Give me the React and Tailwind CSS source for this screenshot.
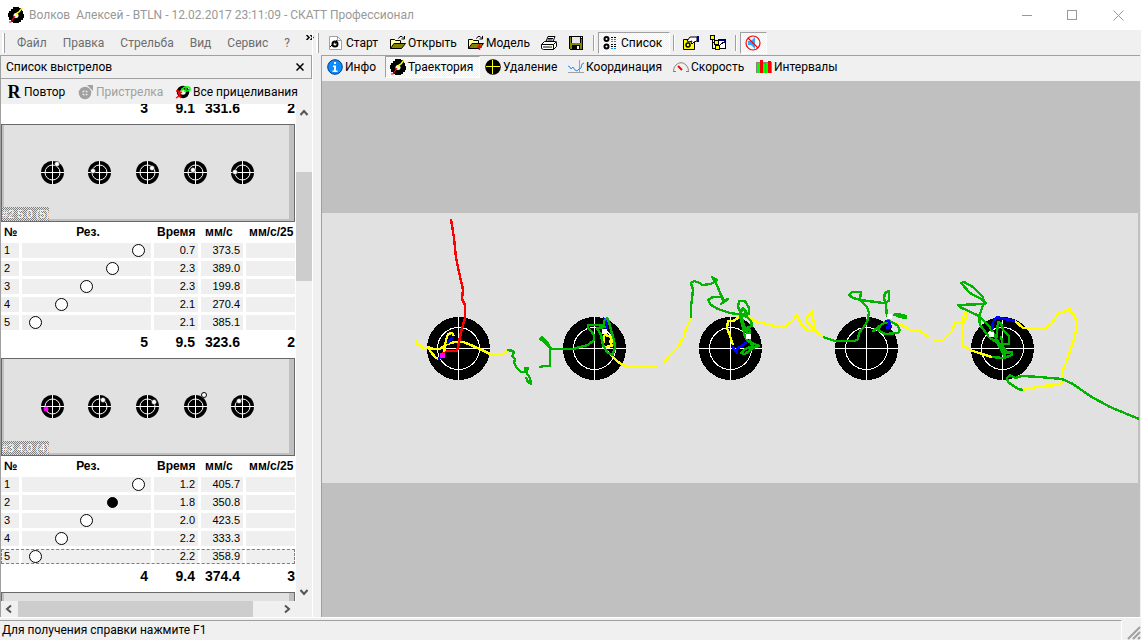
import clsx from 'clsx';

const SERIES = [
  {
    id: 2,
    label: '#2 5.0 (5)',
    hits: [
      { x: 56, y: 40 },
      { x: 92, y: 47 },
      { x: 151, y: 44 },
      { x: 192, y: 46 },
      { x: 234, y: 48 },
    ],
    shots: [
      { n: 1, time: '0.7', speed: '373.5' },
      { n: 2, time: '2.3', speed: '389.0' },
      { n: 3, time: '2.3', speed: '199.8' },
      { n: 4, time: '2.1', speed: '270.4' },
      { n: 5, time: '2.1', speed: '385.1' },
    ],
    total: { hits: '5', time: '9.5', speed: '323.6', last: '2' },
  },
  {
    id: 3,
    label: '#3 4.0 (4)',
    hits: [
      { x: 45, y: 51, color: '#f0f' },
      { x: 102, y: 42 },
      { x: 153, y: 44 },
      { x: 203, y: 37, miss: true },
      { x: 238, y: 43 },
    ],
    shots: [
      { n: 1, time: '1.2', speed: '405.7' },
      { n: 2, time: '1.8', speed: '350.8', filled: true },
      { n: 3, time: '2.0', speed: '423.5' },
      { n: 4, time: '2.2', speed: '333.3' },
      { n: 5, time: '2.2', speed: '358.9', focused: true },
    ],
    total: { hits: '4', time: '9.4', speed: '374.4', last: '3' },
  },
];

// Shot 1 is drawn in the rightmost slot, shot 5 in the leftmost
const SLOTS = ['col-start-5', 'col-start-4', 'col-start-3', 'col-start-2', 'col-start-1'];

const THUMB_TARGETS = [51, 98, 146, 194, 241];
const TARGETS = [458, 594, 730, 866, 1002];

const GREEN = '#00b400';
const YELLOW = '#ffff00';
const BLUE = '#0000ff';
const RED = '#ff0000';

const TRACES = [
  [YELLOW, '416,340 417,344 421,346 425,349 428,347 433,349 440,349 447,344 455,342 463,342 473,346 482,350 490,354 500,355 505,353 507,351'],
  [YELLOW, '428,347 431,352 435,357 438,359'],
  [BLUE, '438,359 442,356'],
  [RED, '451,219 454,238 456,258 459,272 462,285 463,290 462,299 465,305 465,318 461,332 458,347 457,351 445,351 442,355'],
  [YELLOW, '454,336 452,333 448,334 446,340 445,347 444,352'],
  [BLUE, '453,337 447,344'],
  [GREEN, '507,351 508,350 513,351 514,353 512,356 515,359 514,363 517,368 521,372 526,372 525,368 528,368 526,372 530,378 531,384 528,382 526,377'],
  [YELLOW, '604,335 603,347 608,352 613,357 618,362 627,367 657,366'],
  [YELLOW, '604,335 610,336 613,342 610,341 612,346 605,347'],
  [BLUE, '603,318 606,320 607,325 607,330'],
  [GREEN, '539,367 545,366 550,366 550,348 547,342 542,337 540,339 543,341 547,345 552,349 573,349 580,347 588,345 594,340 594,335 591,331 588,328 588,325 598,325 604,325 604,321 607,318 609,322 611,330 614,340 615,348 612,355 607,352 603,345 601,335 597,328 605,327 598,325'],
  [YELLOW, '664,363 670,355 678,347 684,337 686,329 691,318'],
  [YELLOW, '733,345 730,336 727,328 728,321 733,321 740,317 747,317 757,322 767,324 778,327 785,327 792,321 797,315 802,325 807,330 815,331 807,322 807,317 813,311 813,317 815,330 823,337'],
  [GREEN, '691,318 691,307 693,290 691,283 694,281 700,283 702,285 711,284 717,280 712,277 717,285 720,293 724,301 728,299 721,304 724,301 721,297 713,297 708,300 711,305 718,309 730,313 745,315 749,314 749,308 745,301 739,301 738,307 741,313 743,308 747,313 740,315 741,320 743,328 745,337 748,341 759,346 753,348 745,354 741,353 745,349 753,346 750,342 750,330 746,328 752,326 751,321 747,317 741,314'],
  [GREEN, '741,314 744,326 748,334 746,337'],
  [BLUE, '733,346 734,350 737,353 737,349 747,342'],
  [GREEN, '823,337 835,341 855,341 858,339 859,333 863,328 867,322 869,313 867,307 862,302 860,299 861,292 852,292 849,295 853,298 861,300 883,303 889,301 889,291 885,293 884,298 886,305 887,317'],
  [YELLOW, '892,322 902,325 910,330 918,330 929,337'],
  [GREEN, '888,320 873,331 880,327 878,330 885,334 898,333 900,330 897,325 888,320 885,324'],
  [GREEN, '893,315 898,314 906,316 906,318 900,317 896,315 905,317'],
  [BLUE, '885,321 889,321 891,327 887,328 889,323'],
  [YELLOW, '934,340 942,341 953,330 954,324 958,322 963,323 963,317 965,312 967,316 963,323 962,345 970,350 982,354 992,357'],
  [GREEN, '992,357 1003,358 1007,357 1012,355 1012,352 1005,353 1000,348 996,340 997,332 998,322 1001,323 1003,330 1009,336 1009,344 1000,344 1007,352 998,343 990,338 980,325 979,317 983,305 986,303 983,300 970,293 961,283 964,282 973,287 983,297 984,304 958,305 960,307 979,316 990,327 998,342 1005,358 1001,336'],
  [BLUE, '992,330 993,322 997,317 1005,319 1015,321'],
  [YELLOW, '1015,321 1023,328 1045,329 1052,323 1058,314 1070,309 1072,313 1077,320 1075,337 1068,357 1063,370 1062,382 1060,385 1040,386 1023,390'],
  [GREEN, '1023,390 1018,389 1008,382 1007,378 1010,375 1015,378 1022,376 1040,377 1050,378 1062,379 1073,384 1090,396 1110,407 1139,419'],
];

const AIM_POINTS = [
  [602, 329],
  [746, 334],
  [887, 314],
  [989, 332],
];

const ICON = 'h-4 w-4 shrink-0';

function AppIcon({ className = ICON }) {
  return (
    <svg viewBox="0 0 16 16" className={className} aria-hidden="true">
      <path d="M5 0h6v1h3v3h1v3h1v4h-1v2h-2v2h-2v1H5v-1H3v-2H1v-3H0V6h1V4h2V2h2z" fill="#000" />
      <circle cx="8" cy="8.500" r="2.500" fill="#fff" />
      <path d="M8 8 9 6l2-1 3-4" stroke="#ff0" strokeWidth="1.500" fill="none" />
      <path d="M1 15h2l2-3 2-3" stroke="#f00" strokeWidth="1.200" fill="none" />
    </svg>
  );
}

function ReplayIcon() {
  return <span className="w-4 font-['Liberation_Serif',serif] text-lg leading-4 font-bold">R</span>;
}

function ZeroingIcon() {
  return (
    <svg viewBox="0 0 16 16" className={ICON} aria-hidden="true">
      <circle cx="7" cy="9" r="4.500" fill="none" stroke="#a0a0a0" strokeWidth="3.500" />
      <path d="M7 6v6M4 9h6" stroke="#a0a0a0" strokeWidth="1.500" />
      <path d="M9 1h6v6z" fill="#a0a0a0" />
    </svg>
  );
}

function AllAimsIcon() {
  return (
    <svg viewBox="0 0 16 16" className={ICON} aria-hidden="true">
      <circle cx="8" cy="8" r="4.500" fill="#fff" stroke="#000" strokeWidth="3.500" />
      <path d="M7 7V5l3-2h4l1 1v2l-3 1H9M11 3v3" stroke="#0f0" strokeWidth="1.500" fill="none" />
      <path d="M1 7h3l1 2 2-1M3 8l3 6M1 14l3-2 2-4" stroke="#f00" strokeWidth="1.500" fill="none" />
    </svg>
  );
}

function StartIcon() {
  return (
    <svg viewBox="0 0 16 16" className={ICON} aria-hidden="true">
      <path d="M1.500 1.500h8l4 4v9h-12z" fill="#fff" stroke="#a0a0a0" />
      <path d="M9.500 1.500v4h4" fill="none" stroke="#a0a0a0" />
      <circle cx="7" cy="9" r="2.500" fill="#fff" stroke="#000" strokeWidth="2" />
      <path d="M7 9l2-4M2 12l3-3" stroke="#000" />
    </svg>
  );
}

function OpenIcon({ plus }) {
  return (
    <svg viewBox="0 0 16 16" className={ICON} aria-hidden="true">
      <path d="M.5 13.500v-9h4l1 1h5v2.500" fill="#ffff9c" stroke="#000" />
      <path d="M.5 13.500 4 8.500h11.500l-4 5z" fill="#848400" stroke="#000" />
      <path d="M8.500 3.500 10 1.500h2l2 2M14.500 1v3h-3" fill="none" stroke="#000" />
      {plus && <path d="M11.500 9v6M9 12h5" stroke="#f00" strokeWidth="1.500" />}
    </svg>
  );
}

function PrintIcon() {
  return (
    <svg viewBox="0 0 16 16" className={ICON} aria-hidden="true">
      <path d="M5 6.500 7 1.500h7l-2 5z" fill="#fff" stroke="#000" />
      <path d="M7 3.500h5M6.500 5h5" stroke="#000" />
      <path d="m.5 9.500 3-3h11l1 1v4l-3 3h-10l-2-1z" fill="#fff" stroke="#000" />
      <path d="M.5 9.500h12l3-3M12.500 9.500v5M2 12h9" fill="none" stroke="#000" />
      <path d="M8 11h2" stroke="#dede00" />
    </svg>
  );
}

function SaveIcon() {
  return (
    <svg viewBox="0 0 16 16" className={ICON} aria-hidden="true" shapeRendering="crispEdges">
      <path d="M1 1h14v14H2l-1-1z" fill="#000" />
      <path d="M2 2h1v6h10V4h1v10H2z" fill="#848400" />
      <path d="M4 2h8v6H4z" fill="#e8e8e8" />
      <path d="M4 10h8v5H4z" fill="#000" />
      <path d="M9 11h2v3H9zM13 2h1v1h-1z" fill="#fff" />
    </svg>
  );
}

function ListIcon() {
  return (
    <svg viewBox="0 0 16 16" className={ICON} aria-hidden="true">
      <circle cx="3.500" cy="4" r="2" fill="#fff" stroke="#000" strokeWidth="2" />
      <circle cx="3.500" cy="11.500" r="2" fill="#fff" stroke="#000" strokeWidth="2" />
      <path d="M8 2.500h6M8 9.500h6M8 11.500h6" stroke="#000" strokeDasharray="2 1" />
      <path d="M8 4.500h6M8 6.500h6M8 13.500h6" stroke="#0090ff" strokeDasharray="2 1" />
    </svg>
  );
}

function PropertiesIcon() {
  return (
    <svg viewBox="0 0 16 16" className={ICON} aria-hidden="true">
      <path d="M.5 4.500h11v10H.5z" fill="#ff0" stroke="#000" />
      <circle cx="5" cy="10" r="2" fill="none" stroke="#000" strokeWidth="1.500" />
      <path d="m4 6 3-4h7v4l-3 1-2 2-1-1 1-2-3 1z" fill="#fff" stroke="#000" />
      <path d="M14 1h2v6h-2z" fill="#000084" />
    </svg>
  );
}

function TreeIcon() {
  return (
    <svg viewBox="0 0 16 16" className={ICON} aria-hidden="true" shapeRendering="crispEdges">
      <path d="M8.500 4.500h7v9h-8z" fill="#fff" stroke="#000" />
      <path d="M2.500 4v9.500H6M2.500 7.500H5" fill="none" stroke="#000" />
      <path d="M.5.500h4v4h-4zM4.500 5.500h4v4h-4zM5.500 10.500h4v4h-4z" fill="#ff0" stroke="#000" />
      <path d="M9 5.500h6M14.500 5v3" stroke="#000084" />
      <path d="m10 10 4-3" stroke="#000" />
    </svg>
  );
}

function MuteIcon() {
  return (
    <svg viewBox="0 0 16 16" className={ICON} aria-hidden="true">
      <path d="M3 6h3l4-4v12l-4-4H3z" fill="#31a5ff" />
      <circle cx="8" cy="8" r="7" fill="none" stroke="#f00" strokeWidth="1.200" />
      <path d="m3 3 10 10" stroke="#f00" strokeWidth="1.200" />
    </svg>
  );
}

function InfoIcon() {
  return (
    <svg viewBox="0 0 16 16" className={ICON} aria-hidden="true">
      <circle cx="8" cy="8" r="7.300" fill="#0c8cff" stroke="#003c84" />
      <path d="M7 3h2v2H7zM6 6.500h3v5h1.500V13h-5v-1.500H7V8H6z" fill="#fff" />
    </svg>
  );
}

function RemovalIcon() {
  return (
    <svg viewBox="0 0 16 16" className={ICON} aria-hidden="true">
      <circle cx="8" cy="8" r="7.800" fill="#000" />
      <path d="M7.500 1v14M1 7.500h14" stroke="#ff0" />
    </svg>
  );
}

function CoordinationIcon() {
  return (
    <svg viewBox="0 0 16 16" className={ICON} aria-hidden="true">
      <path d="M0 13.500h16M11.500 1v13" stroke="#a0a0a0" />
      <path d="m0 7 2 1 1 2 2-2 2 3 2 1 2-2 2-1 1-4 2-1" fill="none" stroke="#1e90ff" />
    </svg>
  );
}

function SpeedIcon() {
  return (
    <svg viewBox="0 0 16 16" className={ICON} aria-hidden="true">
      <path d="M1 13c-1-2 0-5 2-7 3-3 7-3 10 0 2 2 3 5 2 7" fill="none" stroke="#808080" />
      <path d="M0 12.500h3M13 12.500h3" stroke="#808080" />
      <path d="m5 7 4 4" stroke="#f00" strokeWidth="2" />
    </svg>
  );
}

function IntervalsIcon() {
  return (
    <svg viewBox="0 0 16 16" className={ICON} aria-hidden="true" shapeRendering="crispEdges">
      <path d="M0 3h16v11H0z" fill="#808080" />
      <path d="M1 4h3v10H1zM7 5h2v9H7zM10 4h2v10h-2z" fill="#0f0" />
      <path d="M4 1h3v13H4zM12 2h3v12h-3z" fill="#f00" />
    </svg>
  );
}

function Chevron({ d }) {
  return (
    <svg viewBox="0 0 16 16" className="h-4 w-4" aria-hidden="true">
      <path d={d} fill="none" stroke="#555" strokeWidth="2" />
    </svg>
  );
}

function ToolButton({ icon, label, pressed, disabled, className, title }) {
  return (
    <button
      type="button"
      title={title}
      aria-label={label || title}
      aria-pressed={pressed}
      disabled={disabled}
      className={clsx(
        'flex h-[22px] shrink-0 items-center gap-0.5 overflow-visible border px-1 whitespace-nowrap',
        pressed
          ? 'border-t-[#a0a0a0] border-r-white border-b-white border-l-[#a0a0a0] bg-[repeating-conic-gradient(#fff_0_25%,#f0f0f0_0_50%)] bg-[length:2px_2px]'
          : 'border-transparent',
        disabled && 'text-[#a0a0a0]',
        className
      )}
    >
      {icon}
      {label && <span>{label}</span>}
    </button>
  );
}

function Separator() {
  return <span className="mx-[3px] h-4 w-0.5 shrink-0 border-r border-l border-r-white border-l-[#a0a0a0]" />;
}

function Grip() {
  return <span className="h-5 w-[3px] shrink-0 border-r border-[#a0a0a0] bg-white" />;
}

function SeriesThumb({ label, hits }) {
  return (
    <div className="relative h-[98px] border border-[#696969] bg-[#e1e1e1]">
      <div className="h-full border-r-[5px] border-b-2 border-l-2 border-[#c0c0c0]" />
      <svg viewBox="0 0 292 96" className="absolute inset-0 h-full w-full" aria-hidden="true">
        {THUMB_TARGETS.map((x) => (
          <g key={x} transform={`translate(${x - 1} 47)`}>
            <circle cx=".5" cy=".5" r="11.500" fill="#000" />
            <circle cx=".5" cy=".5" r="7.500" fill="none" stroke="#fff" />
            <path d="M.5-11v23M-11 .5h23" stroke="#fff" />
          </g>
        ))}
        {hits.map((hit) => (
          <circle
            key={hit.x}
            cx={hit.x - 1}
            cy={hit.y - 1}
            r="2.500"
            fill={hit.color || '#fff'}
            stroke={hit.color ? 'none' : '#000'}
            strokeWidth={hit.miss ? 1 : 0.5}
          />
        ))}
      </svg>
      {label && (
        <span className="absolute bottom-0 left-0 h-3.5 bg-[repeating-conic-gradient(#808080_0_25%,#e1e1e1_0_50%)] bg-[length:2px_2px] text-[11px] leading-3.5 text-white">
          {label}
        </span>
      )}
    </div>
  );
}

function Columns() {
  return (
    <colgroup>
      <col className="w-[21px]" />
      <col className="w-[132px]" />
      <col className="w-[47px]" />
      <col className="w-[45px]" />
      <col />
    </colgroup>
  );
}

function TotalRow({ total }) {
  return (
    <tr className="h-[19px] text-right text-sm leading-[19px] font-bold">
      <td />
      <td className="pr-1.5">{total.hits}</td>
      <td className="pr-1.5">{total.time}</td>
      <td className="pr-1.5">{total.speed}</td>
      <td>{total.last}</td>
    </tr>
  );
}

const TABLE = 'mb-[3px] w-full table-fixed border-separate border-spacing-x-0 border-spacing-y-[3px] whitespace-nowrap';
const CELL = 'border-r-[3px] border-white bg-[#efefef] p-0';

function SeriesTable({ shots, total }) {
  return (
    <table className={TABLE}>
      <Columns />
      <thead>
        <tr className="h-[15px] text-xs leading-[15px] font-bold">
          <th className="pl-[3px] text-left">№</th>
          <th>Рез.</th>
          <th className="pl-[3px] text-left">Время</th>
          <th className="pl-1 text-left">мм/с</th>
          <th className="pl-[3px] text-left">мм/с/25</th>
        </tr>
      </thead>
      <tbody>
        {shots.map((shot, i) => (
          <tr
            key={shot.n}
            className={clsx(
              'h-[15px] text-right text-[11px] leading-[15px]',
              shot.focused && 'outline-1 -outline-offset-1 outline-[#808080] outline-dashed'
            )}
          >
            <td className={CELL}>
              <div className="pl-[3px] text-left">{shot.n}</div>
            </td>
            <td className={CELL}>
              <div className="grid h-[15px] grid-cols-5 items-center justify-items-center pl-px">
                <span
                  className={clsx(
                    'rounded-full border',
                    SLOTS[i],
                    shot.filled ? 'h-[11px] w-[11px] border-black bg-black' : 'h-[13px] w-[13px] border-black bg-white'
                  )}
                />
              </div>
            </td>
            <td className={CELL}>
              <div className="pr-[3px]">{shot.time}</div>
            </td>
            <td className={CELL}>
              <div className="pr-[3px]">{shot.speed}</div>
            </td>
            <td className="bg-[#efefef]" />
          </tr>
        ))}
        <TotalRow total={total} />
      </tbody>
    </table>
  );
}

function ShotList() {
  return (
    <div className="flex min-h-0 flex-1 flex-col">
      <div className="flex min-h-0 flex-1">
        <div className="min-w-0 flex-1 overflow-hidden bg-white font-['Liberation_Sans',Arial,sans-serif]">
          {/* list is scrolled part way through the first series */}
          <div className="-mt-2">
            <table className={TABLE}>
              <Columns />
              <tbody>
                <TotalRow total={{ hits: '3', time: '9.1', speed: '331.6', last: '2' }} />
              </tbody>
            </table>
            {SERIES.map((series) => (
              <section key={series.id}>
                <SeriesThumb label={series.label} hits={series.hits} />
                <SeriesTable shots={series.shots} total={series.total} />
              </section>
            ))}
            <SeriesThumb label="" hits={[]} />
          </div>
        </div>
        <div className="flex w-[17px] flex-col items-center border-l border-white bg-[#f0f0f0]">
          <button type="button" aria-label="Вверх">
            <Chevron d="m4.500 11 3.500-4 3.500 4" />
          </button>
          <div className="flex min-h-0 flex-1 flex-col self-stretch">
            <div className="h-[52px]" />
            <div className="h-[109px] bg-[#cdcdcd]" />
          </div>
          <button type="button" aria-label="Вниз">
            <Chevron d="m4.500 5 3.500 4 3.500-4" />
          </button>
        </div>
      </div>
      <div className="flex h-4 shrink-0 bg-[#f0f0f0] pr-[17px]">
        <button type="button" aria-label="Влево">
          <Chevron d="m10 4.500-4 3.500 4 3.500" />
        </button>
        <div className="flex flex-1 pl-px">
          <div className="w-[235px] bg-[#cdcdcd]" />
        </div>
        <button type="button" aria-label="Вправо">
          <Chevron d="m6 4.500 4 3.500-4 3.500" />
        </button>
      </div>
    </div>
  );
}

function TraceCanvas() {
  return (
    <div className="flex min-h-0 flex-1 items-center bg-[#c0c0c0] pr-0.5 pb-0.5">
      <svg
        viewBox="322 213 816 270"
        className="h-auto w-full overflow-visible bg-[#e1e1e1]"
        shapeRendering="crispEdges"
        role="img"
        aria-label="Траектория"
      >
        {TARGETS.map((x) => (
          <g key={x} transform={`translate(${x} 348)`}>
            <circle cx=".5" cy=".5" r="31.500" fill="#000" />
            <circle cx=".5" cy=".5" r="21" fill="none" stroke="#fff" />
            <path d="M.5-31v63M-31 .5h63" stroke="#fff" />
          </g>
        ))}
        {TRACES.map(([color, points]) => (
          <polyline
            key={points}
            points={points}
            fill="none"
            stroke={color}
            strokeWidth="2.400"
            strokeLinejoin="round"
          />
        ))}
        <rect x="440" y="353" width="5" height="5" fill="#f0f" />
        {AIM_POINTS.map(([x, y]) => (
          <rect key={x} x={x} y={y} width="5" height="5" fill="#fff" />
        ))}
      </svg>
    </div>
  );
}

function TitleBar() {
  return (
    <header className="flex h-[30px] shrink-0 items-center bg-white pl-2 text-[#999]">
      <AppIcon className="h-4 w-4 shrink-0" />
      <h1 className="ml-[5px] flex-1 text-xs whitespace-pre">
        Волков  Алексей - BTLN - 12.02.2017 23:11:09 - СКАТТ Профессионал
      </h1>
      <button type="button" aria-label="Свернуть" className="flex w-[45px] justify-center">
        <svg viewBox="0 0 11 11" className="h-[11px] w-[11px]" shapeRendering="crispEdges">
          <path d="M0 5.500h10" stroke="#999" />
        </svg>
      </button>
      <button type="button" aria-label="Развернуть" className="flex w-[45px] justify-center">
        <svg viewBox="0 0 11 11" className="h-[11px] w-[11px]" shapeRendering="crispEdges">
          <path d="M.5.500h9v9h-9z" fill="none" stroke="#999" />
        </svg>
      </button>
      <button type="button" aria-label="Закрыть" className="flex w-[46px] justify-center">
        <svg viewBox="0 0 11 11" className="h-[11px] w-[11px]">
          <path d="m.5.500 10 10M10.500.500l-10 10" stroke="#999" />
        </svg>
      </button>
    </header>
  );
}

function App() {
  return (
    <div className="flex h-screen flex-col overflow-hidden bg-[#f0f0f0] font-['Roboto','Noto_Sans',sans-serif] text-xs text-black">
      <TitleBar />
      <div className="flex min-h-0 flex-1">
        <aside className="flex w-[312px] shrink-0 flex-col">
          <nav className="flex h-[25px] shrink-0 items-center gap-4 pl-0.5 text-[#6d6d6d]">
            <Grip />
            <button type="button" className="-ml-1">Файл</button>
            <button type="button">Правка</button>
            <button type="button">Стрельба</button>
            <button type="button">Вид</button>
            <button type="button">Сервис</button>
            <button type="button">?</button>
            <button type="button" aria-label="Ещё" className="mr-[3px] mb-2.5 ml-auto shrink-0">
              <svg viewBox="0 0 8 5" className="h-[5px] w-2" aria-hidden="true">
                <path d="m.5 0 2.500 2.500L.5 5M4.500 0 7 2.500 4.500 5" fill="none" stroke="#000" strokeWidth="1.500" />
              </svg>
            </button>
          </nav>
          <div className="flex h-6 shrink-0 items-center justify-between border border-[#a0a0a0] pr-[7px] pl-[5px]">
            <h2>Список выстрелов</h2>
            <button type="button" aria-label="Закрыть панель">
              <svg viewBox="0 0 8 8" className="h-2 w-2" aria-hidden="true">
                <path d="m.5.500 7 7M7.500.500l-7 7" stroke="#000" strokeWidth="1.500" />
              </svg>
            </button>
          </div>
          <div className="flex min-h-0 flex-1 flex-col border-l border-[#a0a0a0]">
            <div className="flex h-[25px] shrink-0 items-center">
              <ToolButton icon={<ReplayIcon />} label="Повтор" className="w-[72px]" />
              <ToolButton icon={<ZeroingIcon />} label="Пристрелка" disabled className="w-[97px]" />
              <ToolButton icon={<AllAimsIcon />} label="Все прицеливания" />
            </div>
            <ShotList />
          </div>
        </aside>
        <main className="flex min-w-0 flex-1 flex-col border-l border-white pr-px">
          <div className="flex h-[25px] shrink-0 items-center pl-[3px]">
            <Grip />
            <div className="flex flex-1 items-center pl-1">
              <ToolButton icon={<StartIcon />} label="Старт" className="w-[62px]" />
              <ToolButton icon={<OpenIcon />} label="Открыть" className="w-[78px]" />
              <ToolButton icon={<OpenIcon plus />} label="Модель" className="w-[73px]" />
              <ToolButton icon={<PrintIcon />} title="Печать" className="w-[27px]" />
              <ToolButton icon={<SaveIcon />} title="Сохранить" className="w-[27px]" />
              <Separator />
              <ToolButton icon={<ListIcon />} label="Список" pressed className="w-[72px]" />
              <Separator />
              <ToolButton icon={<PropertiesIcon />} title="Свойства" className="w-[27px]" />
              <ToolButton icon={<TreeIcon />} title="Дерево" className="w-[27px]" />
              <Separator />
              <ToolButton icon={<MuteIcon />} title="Без звука" pressed className="w-[27px]" />
            </div>
          </div>
          <div className="ml-2 flex min-h-0 flex-1 flex-col border-t border-l border-[#a0a0a0]">
            <div className="flex h-[25px] shrink-0 items-start">
              <ToolButton icon={<InfoIcon />} label="Инфо" className="w-[63px]" />
              <ToolButton icon={<AppIcon />} label="Траектория" pressed className="w-[95px]" />
              <ToolButton icon={<RemovalIcon />} label="Удаление" className="w-[83px]" />
              <ToolButton icon={<CoordinationIcon />} label="Координация" className="w-[105px]" />
              <ToolButton icon={<SpeedIcon />} label="Скорость" className="w-[83px]" />
              <ToolButton icon={<IntervalsIcon />} label="Интервалы" className="w-[90px]" />
            </div>
            <TraceCanvas />
          </div>
        </main>
      </div>
      <footer className="flex h-[23px] shrink-0 items-end border-t border-white pt-0.5">
        <p className="h-5 flex-1 border-t border-r border-t-[#a0a0a0] border-r-white pl-0.5 leading-[18px]">
          Для получения справки нажмите F1
        </p>
        <svg viewBox="0 0 19 14" className="h-3.5 w-[19px]" aria-hidden="true">
          <path d="M6 13 18 1M11 13l7-7M16 13l2-2" stroke="#a0a0a0" strokeWidth="2" />
        </svg>
      </footer>
    </div>
  );
}

export default App;
